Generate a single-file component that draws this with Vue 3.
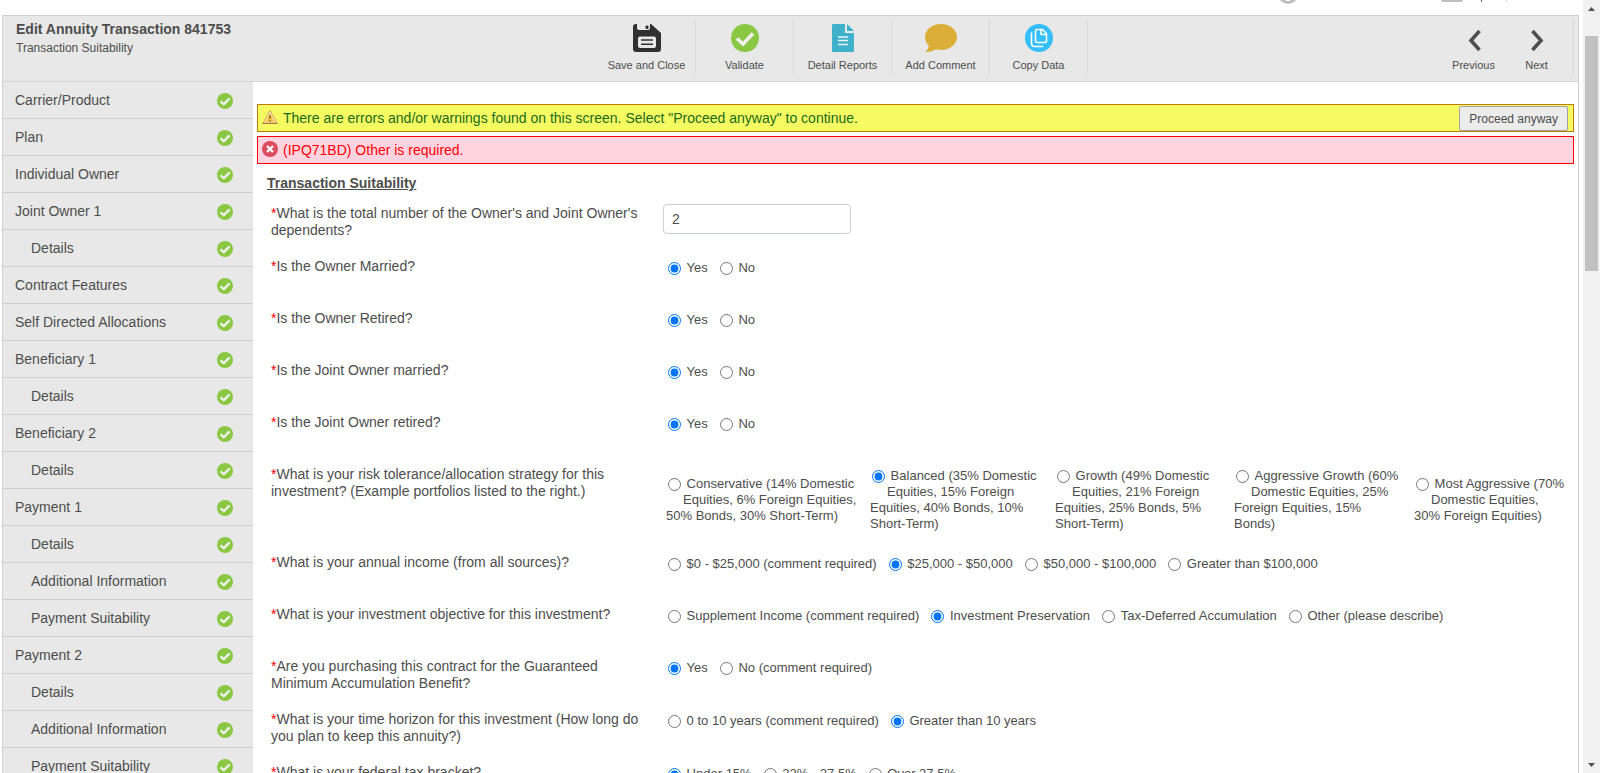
<script setup>
import { reactive } from 'vue'

const steps = [
  { name: 'Carrier/Product' },
  { name: 'Plan' },
  { name: 'Individual Owner' },
  { name: 'Joint Owner 1' },
  { name: 'Details', sub: true },
  { name: 'Contract Features' },
  { name: 'Self Directed Allocations' },
  { name: 'Beneficiary 1' },
  { name: 'Details', sub: true },
  { name: 'Beneficiary 2' },
  { name: 'Details', sub: true },
  { name: 'Payment 1' },
  { name: 'Details', sub: true },
  { name: 'Additional Information', sub: true },
  { name: 'Payment Suitability', sub: true },
  { name: 'Payment 2' },
  { name: 'Details', sub: true },
  { name: 'Additional Information', sub: true },
  { name: 'Payment Suitability', sub: true },
]

const questions = [
  { id: 'ownerMarried', text: 'Is the Owner Married?', options: ['Yes', 'No'] },
  { id: 'ownerRetired', text: 'Is the Owner Retired?', options: ['Yes', 'No'] },
  { id: 'jointMarried', text: 'Is the Joint Owner married?', options: ['Yes', 'No'] },
  { id: 'jointRetired', text: 'Is the Joint Owner retired?', options: ['Yes', 'No'] },
  {
    id: 'risk',
    wide: true,
    text: 'What is your risk tolerance/allocation strategy for this investment? (Example portfolios listed to the right.)',
    options: [
      'Conservative (14% Domestic Equities, 6% Foreign Equities, 50% Bonds, 30% Short-Term)',
      'Balanced (35% Domestic Equities, 15% Foreign Equities, 40% Bonds, 10% Short-Term)',
      'Growth (49% Domestic Equities, 21% Foreign Equities, 25% Bonds, 5% Short-Term)',
      'Aggressive Growth (60% Domestic Equities, 25% Foreign Equities, 15% Bonds)',
      'Most Aggressive (70% Domestic Equities, 30% Foreign Equities)',
    ],
  },
  {
    id: 'income',
    text: 'What is your annual income (from all sources)?',
    options: ['$0 - $25,000 (comment required)', '$25,000 - $50,000', '$50,000 - $100,000', 'Greater than $100,000'],
  },
  {
    id: 'objective',
    text: 'What is your investment objective for this investment?',
    options: ['Supplement Income (comment required)', 'Investment Preservation', 'Tax-Deferred Accumulation', 'Other (please describe)'],
  },
  {
    id: 'benefit',
    text: 'Are you purchasing this contract for the Guaranteed Minimum Accumulation Benefit?',
    options: ['Yes', 'No (comment required)'],
  },
  {
    id: 'horizon',
    text: 'What is your time horizon for this investment (How long do you plan to keep this annuity?)',
    options: ['0 to 10 years (comment required)', 'Greater than 10 years'],
  },
  { id: 'bracket', text: 'What is your federal tax bracket?', options: ['Under 15%', '22% - 27.5%', 'Over 27.5%'] },
]

const answers = reactive({
  dependents: '2',
  ownerMarried: 0,
  ownerRetired: 0,
  jointMarried: 0,
  jointRetired: 0,
  risk: 1,
  income: 1,
  objective: 1,
  benefit: 0,
  horizon: 1,
  bracket: 0,
})
</script>

<template>
  <div class="window">
    <div class="page">
      <div class="topbar" aria-hidden="true">
        <svg width="224" height="15" viewBox="0 0 224 15">
          <circle cx="9" cy="-6" r="8.5" fill="none" stroke="#bdbdbd" stroke-width="3" />
          <rect x="162" y="-14" width="22" height="16" rx="2" fill="#bdbdbd" />
          <rect x="202" y="0" width="1" height="2" fill="#6d5a4c" />
          <rect x="227" y="0" width="1" height="1" fill="#d9b08c" />
        </svg>
      </div>

      <div class="frame">
        <header class="header">
          <div class="titles">
            <h1>Edit Annuity Transaction 841753</h1>
            <p>Transaction Suitability</p>
          </div>
          <div class="actions">
            <div class="tools">
              <button type="button" class="tool">
                <svg width="28" height="28" viewBox="0 0 28 28">
                  <path fill="#303030" d="M3 0H18L28 9V25a3 3 0 0 1-3 3H3a3 3 0 0 1-3-3V3a3 3 0 0 1 3-3z" />
                  <path fill="#e8e8e8" d="M4 0H17V4a2 2 0 0 1-2 2H6a2 2 0 0 1-2-2z" />
                  <rect x="12.5" y="1.5" width="3" height="3.5" rx="1.2" fill="#303030" />
                  <rect x="5" y="12.5" width="18" height="11.5" rx="2" fill="#e8e8e8" />
                  <path d="M8 16H20M8 20.3H20" stroke="#303030" stroke-width="1.5" />
                </svg>
                <span>Save and Close</span>
              </button>
              <button type="button" class="tool">
                <svg width="28" height="28" viewBox="0 0 28 28">
                  <circle cx="14" cy="14" r="14" fill="#8ac843" />
                  <path d="M6 14.5L12 20L22 9.5" fill="none" stroke="#f0f0f0" stroke-width="3.6" />
                </svg>
                <span>Validate</span>
              </button>
              <button type="button" class="tool">
                <svg width="22" height="28" viewBox="0 0 22 28">
                  <path fill="#3fb1cb" d="M1 0H13V9H22V27a1 1 0 0 1-1 1H1a1 1 0 0 1-1-1V1a1 1 0 0 1 1-1z" />
                  <path fill="#3fb1cb" d="M15 0L22 7H15z" />
                  <path d="M6 13H16M6 16.5H16M6 20.5H16" stroke="#e8f4f7" stroke-width="1.5" />
                </svg>
                <span>Detail Reports</span>
              </button>
              <button type="button" class="tool">
                <svg width="32" height="28" viewBox="0 0 32 28">
                  <path fill="#dbae38" d="M16 0C25 0 32 5.7 32 13S25 26 16 26c-2 0-3.7-.2-5.4-.8C7.5 27.3 4 28 .5 28C2.500 26.200 3.500 24 3.800 21.500C1.400 19.200 0 16.300 0 13C0 5.700 7 0 16 0z" />
                </svg>
                <span>Add Comment</span>
              </button>
              <button type="button" class="tool">
                <svg width="28" height="28" viewBox="0 0 28 28">
                  <circle cx="14" cy="14" r="14" fill="#35bffa" />
                  <g fill="none" stroke="#fff" stroke-width="1.6" stroke-linejoin="round" stroke-linecap="round">
                    <path d="M12 5.500H17.500L21.500 9.500V17a1.500 1.500 0 0 1-1.500 1.500H12a1.500 1.500 0 0 1-1.500-1.500V7a1.500 1.500 0 0 1 1.500-1.500z" />
                    <path d="M16 6V10.500H21" />
                    <path d="M6.500 9V19.500a3 3 0 0 0 3 3H17.500" />
                  </g>
                </svg>
                <span>Copy Data</span>
              </button>
            </div>
            <div class="pager">
              <button type="button" class="step">
                <svg width="28" height="28" viewBox="0 0 28 28"><path d="M19.500 7L11 16.500L19.500 26" fill="none" stroke="#4f4f4f" stroke-width="3.6" /></svg>
                <span>Previous</span>
              </button>
              <button type="button" class="step">
                <svg width="28" height="28" viewBox="0 0 28 28"><path d="M9.500 7L18 16.500L9.500 26" fill="none" stroke="#4f4f4f" stroke-width="3.6" /></svg>
                <span>Next</span>
              </button>
            </div>
          </div>
        </header>

        <div class="body">
          <nav class="sidebar">
            <ul>
              <li v-for="(s, i) in steps" :key="i">
                <a href="#" :class="{ sub: s.sub }">
                  <span>{{ s.name }}</span>
                  <svg width="16" height="16" viewBox="0 0 28 28">
                    <circle cx="14" cy="14" r="14" fill="#8ac843" />
                    <path d="M6 14.500L12 19.500L22 9.500" fill="none" stroke="#f0f0f0" stroke-width="4" />
                  </svg>
                </a>
              </li>
            </ul>
          </nav>

          <main class="content">
            <div class="alert warning">
              <svg width="16" height="16" viewBox="0 0 16 16">
                <path d="M8 1.500L15 14H1z" fill="#fdf6d8" stroke="#d8a050" stroke-linejoin="round" />
                <path d="M8 4L13 13H3z" fill="#f3c745" />
                <path d="M8 6V10M8 11V12.500" stroke="#a06a28" stroke-width="1.5" />
                <path d="M.5 14.500H15.500" stroke="#b0703c" />
              </svg>
              <span>There are errors and/or warnings found on this screen. Select "Proceed anyway" to continue.</span>
              <button type="button" class="proceed">Proceed anyway</button>
            </div>
            <div class="alert error">
              <svg width="16" height="16" viewBox="0 0 16 16">
                <circle cx="8" cy="8" r="8" fill="#dc4b5e" />
                <path d="M5 5L11 11M11 5L5 11" stroke="#fff" stroke-width="2.4" />
              </svg>
              <span>(IPQ71BD) Other is required.</span>
            </div>

            <form @submit.prevent>
              <h2>Transaction Suitability</h2>
              <div class="row">
                <label class="question" for="dependents"><i>*</i>What is the total number of the Owner's and Joint Owner's dependents?</label>
                <div class="field">
                  <input id="dependents" v-model="answers.dependents" type="text" />
                </div>
              </div>
              <div v-for="q in questions" :key="q.id" class="row">
                <div :id="q.id" class="question"><i>*</i>{{ q.text }}</div>
                <div class="options" :class="{ wide: q.wide }" role="radiogroup" :aria-labelledby="q.id">
                  <label v-for="(o, i) in q.options" :key="o">
                    <input v-model="answers[q.id]" type="radio" :name="q.id" :value="i" />&nbsp;{{ o }}
                  </label>
                </div>
              </div>
            </form>
          </main>
        </div>
      </div>
    </div>

    <div class="scrollbar" aria-hidden="true">
      <svg width="17" height="17" viewBox="0 0 17 17"><path d="M5 11L8.500 7L12 11z" fill="#505050" /></svg>
      <div class="track"><div class="thumb"></div></div>
      <svg width="17" height="17" viewBox="0 0 17 17"><path d="M5 7L8.500 11L12 7z" fill="#505050" /></svg>
    </div>
  </div>
</template>

<style>
body {
  background: #fff;
}
</style>

<style scoped>
.window {
  display: flex;
  height: 100vh;
  overflow: hidden;
  font-family: "Liberation Sans", Arial, sans-serif;
  font-size: 14px;
  line-height: 17px;
  color: #4d4d4d;
}
.window * {
  box-sizing: border-box;
}
h1, h2, p, ul {
  margin: 0;
  padding: 0;
}
button {
  font-family: inherit;
  color: inherit;
}
svg {
  display: block;
  flex: none;
}
.page {
  flex: 1;
  min-width: 0;
  display: flex;
  flex-direction: column;
  padding: 0 4px 0 2px;
}
.topbar {
  flex: none;
  height: 15px;
  display: flex;
  justify-content: flex-end;
  padding-right: 76px;
}
.topbar svg {
  overflow: visible;
}
.frame {
  flex: 1;
  min-height: 0;
  display: flex;
  flex-direction: column;
  border: 1px solid #cfcfcf;
  border-bottom: 0;
}
.header {
  flex: none;
  display: grid;
  grid-template-columns: 17fr 28fr;
  height: 66px;
  background: #e8e8e8;
  border-bottom: 1px solid #d6d6d6;
}
.titles {
  padding: 4px 13px;
}
h1 {
  font-size: 14px;
  line-height: 18px;
}
.titles p {
  font-size: 12px;
  line-height: 20px;
}
.actions {
  display: flex;
  justify-content: space-between;
  padding: 3px 4px 6px 0;
}
.tools,
.pager {
  display: flex;
}
.tool,
.step {
  display: flex;
  flex-direction: column;
  align-items: center;
  gap: 5px;
  padding: 5px 0 0;
  border: 0;
  background: none;
  font-size: 11px;
  line-height: 16px;
}
.tool {
  width: 98px;
  border-right: 1px solid #d9d9d9;
}
.step {
  width: 63px;
}
.pager {
  padding-right: 5px;
  border-right: 1px solid #d9d9d9;
}
.body {
  flex: 1;
  min-height: 0;
  display: flex;
  overflow: hidden;
}
.sidebar {
  flex: none;
  width: 250px;
  background: #e8e8e8;
}
.sidebar ul {
  list-style: none;
}
.sidebar a {
  display: flex;
  align-items: center;
  justify-content: space-between;
  height: 37px;
  padding: 0 20px 0 12px;
  border-bottom: 1px solid #cdcdcd;
  color: inherit;
  text-decoration: none;
}
.sidebar a.sub {
  padding-left: 28px;
}
.sidebar svg {
  margin-top: 2px;
}
.content {
  flex: 1;
  min-width: 0;
  display: flex;
  flex-direction: column;
  gap: 4px;
  padding: 22px 4px 0;
}
.alert {
  flex: none;
  display: flex;
  align-items: center;
  gap: 5px;
  height: 28px;
  padding: 0 5px 0 4px;
  border: 1px solid;
}
.alert svg {
  margin-bottom: 2px;
}
.warning {
  background: #f6fb62;
  border-color: #c37a00;
}
.warning span {
  color: #1a6b1a;
}
.error {
  background: #ffd4e0;
  border-color: #f00;
}
.error span {
  color: #f00;
}
.proceed {
  height: 25px;
  margin: 1px 0 0 auto;
  padding: 0 9px;
  border: 1px solid #a3a3a3;
  border-radius: 2px;
  background: #ececec;
  font-size: 12px;
}
form {
  padding: 6px 0 0 10px;
}
h2 {
  font-size: 14px;
  line-height: 18px;
  margin-bottom: 9px;
  text-decoration: underline;
}
.row {
  display: flex;
  min-height: 52px;
  padding-left: 4px;
}
.question {
  flex: none;
  width: 392px;
  padding: 4px 20px 15px 0;
}
.question i {
  font-style: normal;
  color: #f00;
}
.field {
  padding-top: 3px;
}
.field input {
  display: block;
  width: 188px;
  height: 30px;
  padding: 0 8px;
  border: 1px solid #c9cfd6;
  border-radius: 4px;
  background: #fff;
  font: inherit;
  color: inherit;
}
.options {
  flex: 1;
  display: flex;
  align-items: flex-start;
  padding: 6px 0 18px 3px;
  font-size: 13px;
  line-height: 16px;
}
.options label {
  padding-right: 10px;
}
.options.wide {
  display: grid;
  grid-template-columns: 204fr 185fr 179fr 180fr 160fr;
  align-items: center;
}
.options.wide label {
  padding-right: 12px;
}
.options.wide label:last-child {
  padding-right: 8px;
}
.options input {
  float: left;
  width: 13px;
  height: 13px;
  margin: 2px 2px 3px;
}
.scrollbar {
  flex: none;
  width: 17px;
  display: flex;
  flex-direction: column;
  background: #f1f1f1;
}
.track {
  flex: 1;
  padding: 19px 2px 0;
}
.thumb {
  height: 32.6%;
  background: #c1c1c1;
}
</style>
